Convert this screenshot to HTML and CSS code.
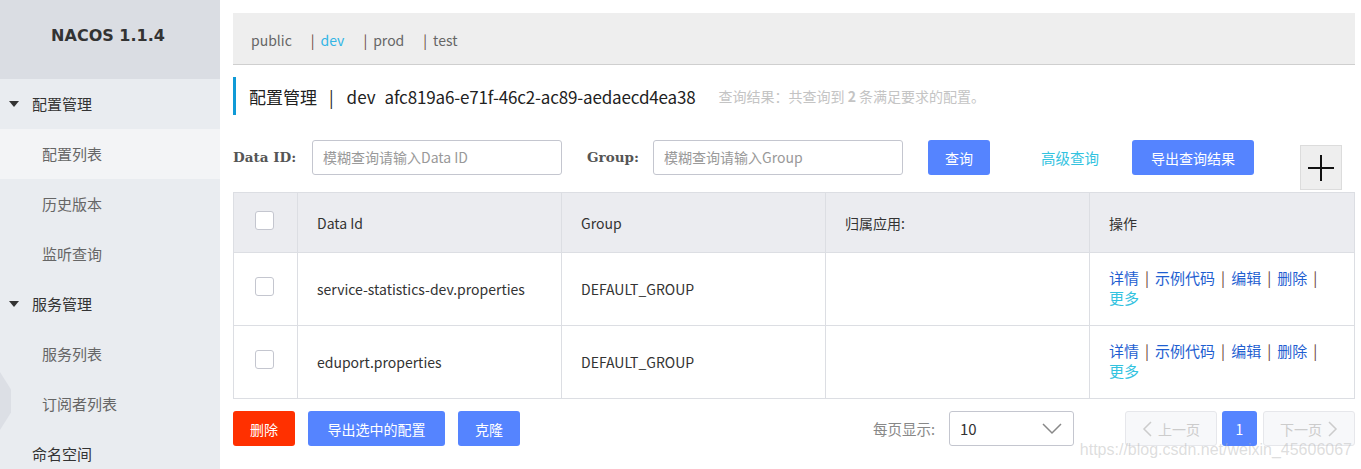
FILE: index.html
```html
<!DOCTYPE html>
<html lang="zh">
<head>
<meta charset="utf-8">
<title>Nacos</title>
<link rel="stylesheet" href="styles.css">
</head>
<body>
<aside class="sidebar">
  <div class="logo">NACOS 1.1.4</div>
  <div class="menu-group"><span class="caret"></span>配置管理</div>
  <div class="menu-item active">配置列表</div>
  <div class="menu-item">历史版本</div>
  <div class="menu-item">监听查询</div>
  <div class="menu-group"><span class="caret"></span>服务管理</div>
  <div class="menu-item">服务列表</div>
  <div class="menu-item">订阅者列表</div>
  <div class="menu-top">命名空间</div>
  <div class="hex"></div>
</aside>
<main class="main">
  <div class="tabs">
    <span class="tab">public</span>
    <span class="sep">|</span><span class="tab current">dev</span>
    <span class="sep">|</span><span class="tab">prod</span>
    <span class="sep">|</span><span class="tab">test</span>
  </div>
  <div class="title-row">
    <h1 class="title">配置管理<span class="bar">|</span>dev<span class="ns">afc819a6-e71f-46c2-ac89-aedaecd4ea38</span></h1>
    <span class="result">查询结果：共查询到 <b>2</b> 条满足要求的配置。</span>
  </div>
  <div class="search">
    <label class="lbl">Data ID:</label>
    <div class="input">模糊查询请输入Data ID</div>
    <label class="lbl lbl-group">Group:</label>
    <div class="input">模糊查询请输入Group</div>
    <button class="btn btn-query">查询</button>
    <a class="adv">高级查询</a>
    <button class="btn btn-export">导出查询结果</button>
    <button class="plus"><svg width="28" height="28" viewBox="0 0 28 28"><path d="M14 1V27M1 14H27" stroke="#111" stroke-width="2" fill="none"/></svg></button>
  </div>
  <table class="grid">
    <colgroup><col class="c-check"><col class="c-mid"><col class="c-mid"><col class="c-mid"><col></colgroup>
    <thead>
      <tr><th><span class="cb"></span></th><th>Data Id</th><th>Group</th><th>归属应用:</th><th>操作</th></tr>
    </thead>
    <tbody>
      <tr>
        <td><span class="cb"></span></td>
        <td>service-statistics-dev.properties</td>
        <td>DEFAULT_GROUP</td>
        <td></td>
        <td class="ops"><a>详情</a><i>|</i><a>示例代码</a><i>|</i><a>编辑</a><i>|</i><a>删除</a><i>|</i><br><a class="more">更多</a></td>
      </tr>
      <tr>
        <td><span class="cb"></span></td>
        <td>eduport.properties</td>
        <td>DEFAULT_GROUP</td>
        <td></td>
        <td class="ops"><a>详情</a><i>|</i><a>示例代码</a><i>|</i><a>编辑</a><i>|</i><a>删除</a><i>|</i><br><a class="more">更多</a></td>
      </tr>
    </tbody>
  </table>
  <div class="footer">
    <button class="btn btn-del">删除</button>
    <button class="btn btn-sel">导出选中的配置</button>
    <button class="btn btn-clone">克隆</button>
    <span class="spacer"></span>
    <span class="per">每页显示:</span>
    <div class="select">10<svg width="20" height="12" viewBox="0 0 20 12"><path d="M1 1L10 10L19 1" stroke="#888" stroke-width="1.5" fill="none"/></svg></div>
    <button class="pg pg-prev"><svg width="10" height="16" viewBox="0 0 10 16"><path d="M9 1L2 8L9 15" stroke="#ccc" stroke-width="1.5" fill="none"/></svg>上一页</button>
    <button class="pg pg-cur">1</button>
    <button class="pg pg-next">下一页<svg width="10" height="16" viewBox="0 0 10 16"><path d="M1 1L8 8L1 15" stroke="#ccc" stroke-width="1.5" fill="none"/></svg></button>
  </div>
  <div class="watermark">https://blog.csdn.net/weixin_45606067</div>
</main>
</body>
</html>
```
FILE: styles.css
```css
* { box-sizing: border-box; }
html, body { margin: 0; padding: 0; }
body {
  display: flex;
  width: 1361px;
  height: 469px;
  overflow: hidden;
  background: #fff;
  font-family: "Noto Sans CJK SC", "Noto Sans", sans-serif;
  font-size: 14px;
  color: #333;
}
.sidebar {
  position: relative;
  width: 220px;
  flex: none;
  background: #e9ecf0;
  height: 469px;
  overflow: hidden;
}
.logo {
  height: 79px;
  background: #dadde3;
  display: flex;
  align-items: center;
  justify-content: center;
  font-family: "DejaVu Sans", sans-serif;
  font-weight: bold;
  font-size: 16px;
  color: #333;
  padding: 0 4px 8px 0;
}
.menu-group, .menu-item, .menu-top {
  height: 50px;
  display: flex;
  align-items: center;
  font-size: 15px;
  padding-bottom: 1px;
}
.menu-group { padding-left: 9px; color: #333; }
.caret {
  width: 0; height: 0;
  border-left: 5px solid transparent;
  border-right: 5px solid transparent;
  border-top: 6px solid #333;
  margin-right: 13px;
}
.menu-item { padding-left: 42px; color: #666; }
.menu-item.active { background: #f3f4f6; }
.menu-top { padding-left: 32px; color: #333; }
.hex {
  position: absolute;
  left: 0;
  top: 372px;
  width: 11px;
  height: 58px;
  background: #dcdfe5;
  clip-path: polygon(0 0, 100% 30%, 100% 70%, 0 100%);
}
.main {
  position: relative;
  width: 1141px;
  padding: 13px 6px 0 13px;
}
.tabs {
  height: 52px;
  background: #eeeeee;
  border-bottom: 1px solid #cfcfcf;
  display: flex;
  align-items: center;
  padding: 2px 0 0 18px;
  color: #666;
  font-size: 14px;
}
.tab { color: #666; }
.tab.current { color: #33b5e5; }
.sep { color: #6b4a3e; margin: 0 6px 0 19px; }
.title-row {
  margin-top: 12px;
  height: 38px;
  display: flex;
  align-items: center;
  border-left: 3px solid #109ad6;
  padding-left: 13px;
}
.title {
  margin: 0;
  font-weight: normal;
  font-size: 17px;
  color: #222;
  display: flex;
  align-items: center;
}
.bar { margin: 0 13px 0 12px; }
.ns { margin-left: 9px; letter-spacing: -0.15px; }
.result {
  margin-left: 23px;
  color: #c4c4c4;
  font-size: 14px;
}
.result b { font-weight: bold; }
.search {
  margin-top: 25px;
  height: 52px;
  display: flex;
  align-items: flex-start;
}
.lbl {
  height: 35px;
  line-height: 35px;
  font-family: "DejaVu Serif", serif;
  font-weight: bold;
  font-size: 13.5px;
  color: #555;
  width: 79px;
}
.lbl-group { width: 66px; margin-left: 25px; }
.input {
  width: 250px;
  height: 35px;
  border: 1px solid #c4c6cf;
  border-radius: 3px;
  padding-left: 10px;
  line-height: 33px;
  color: #999;
  font-size: 14px;
}
.btn {
  height: 35px;
  border: none;
  border-radius: 3px;
  color: #fff;
  font-family: inherit;
  font-size: 14px;
  padding: 0;
}
.btn-query { width: 62px; background: #5584ff; margin-left: 25px; }
.adv {
  height: 35px;
  line-height: 35px;
  color: #33c3df;
  margin-left: 51px;
  width: 91px;
  font-size: 14.5px;
}
.btn-export { width: 122px; background: #5584ff; }
.plus {
  margin: 5px 0 0 46px;
  width: 42px;
  height: 45px;
  background: #eeeeee;
  border: 1px solid #dcdcdc;
  padding: 0;
  display: flex;
  align-items: center;
  justify-content: center;
}
.grid {
  width: 1122px;
  border-collapse: collapse;
  border: 1px solid #dcdee3;
  table-layout: fixed;
}
.c-check { width: 64px; }
.c-mid { width: 264px; }
.grid th, .grid td {
  border: 1px solid #dcdee3;
  text-align: left;
  padding: 0 0 0 19px;
  font-weight: normal;
  color: #333;
  font-size: 14px;
  vertical-align: middle;
}
.grid th { height: 60px; background: #ebecf0; }
.grid td { height: 73px; }
.grid th:first-child, .grid td:first-child { padding-left: 21px; }
.cb {
  display: block;
  width: 19px;
  height: 19px;
  border: 1px solid #c4c6cf;
  border-radius: 3px;
  background: #fff;
  margin-top: -5px;
}
.grid td.ops { line-height: 20px; font-size: 15px; padding-bottom: 3px; }
.ops a { color: #1f5fd1; }
.ops i { font-style: normal; color: #6b4a3e; margin: 0 6px; }
.ops a.more { color: #33c3df; }
.footer {
  margin-top: 12px;
  height: 35px;
  display: flex;
  align-items: center;
}
.btn-del { width: 62px; background: #ff3000; }
.btn-sel { width: 137px; background: #5584ff; margin-left: 13px; }
.btn-clone { width: 62px; background: #5584ff; margin-left: 13px; }
.spacer { flex: 1; }
.per { color: #888; margin-right: 14px; font-size: 14.5px; }
.select {
  width: 125px;
  height: 35px;
  border: 1px solid #c4c6cf;
  border-radius: 3px;
  display: flex;
  align-items: center;
  justify-content: space-between;
  padding: 0 11px 0 10px;
  color: #333;
  font-size: 15px;
  margin-right: 51px;
}
.pg {
  height: 35px;
  border-radius: 3px;
  font-family: inherit;
  font-size: 14px;
  padding: 0;
  display: flex;
  align-items: center;
  justify-content: center;
  gap: 6px;
}
.pg-prev, .pg-next {
  width: 92px;
  background: #f7f8fa;
  border: 1px solid #e6e7eb;
  color: #ccc;
}
.pg-cur {
  width: 35px;
  margin: 0 6px 0 5px;
  background: #5584ff;
  border: none;
  color: #fff;
}
.watermark {
  position: absolute;
  right: 9px;
  top: 441px;
  font-family: "Liberation Sans", Arial, sans-serif;
  font-size: 16px;
  color: rgba(180, 180, 180, 0.45);
  pointer-events: none;
}
```
